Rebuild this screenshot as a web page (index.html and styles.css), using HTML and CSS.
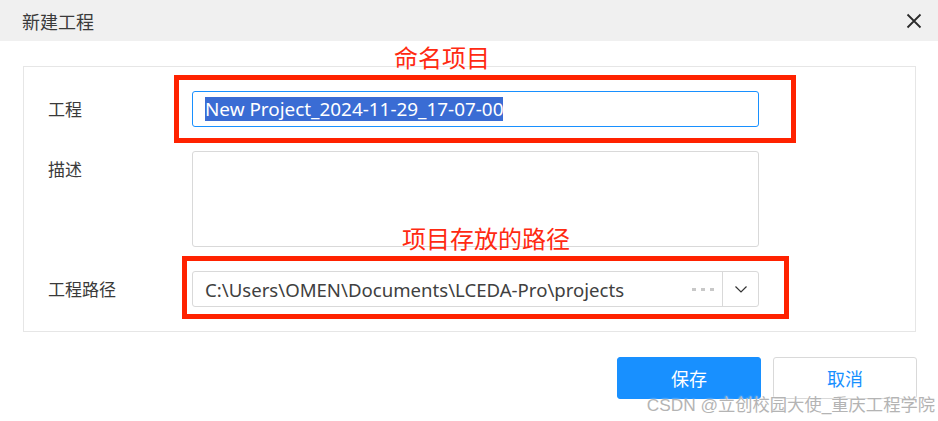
FILE: index.html
```html
<!DOCTYPE html>
<html lang="zh-CN">
  <head>
    <meta charset="utf-8">
    <title>新建工程</title>
    <link rel="stylesheet" href="styles.css">
  </head>
  <body>

  <div class="dialog">
    <div class="dialog-header">
      <span class="dialog-title">新建工程</span>
      <span class="dialog-close">
        <svg width="16" height="16" viewBox="0 0 16 16"><path d="M1.5 1.5 L14.5 14.5 M14.5 1.5 L1.5 14.5" stroke="#2b2b2b" stroke-width="1.8" fill="none"/></svg>
      </span>
    </div>

    <div class="dialog-body">
      <div class="form-panel">
        <div class="form-label">工程</div>
        <div class="text-input focused"><span class="selected">New Project_2024-11-29_17-07-00</span></div>

        <div class="form-label">描述</div>
        <div class="text-area"></div>

        <div class="form-label">工程路径</div>
        <div class="path-input">
          <div class="path-text">C:\Users\OMEN\Documents\LCEDA-Pro\projects</div>
          <div class="path-dots">
            <svg width="22" height="4" viewBox="0 0 22 4"><rect x="0" y="0" width="4" height="3" fill="#c8c8c8"/><rect x="9" y="0" width="4" height="3" fill="#c8c8c8"/><rect x="18" y="0" width="4" height="3" fill="#c8c8c8"/></svg>
          </div>
          <div class="path-arrow">
            <svg width="12" height="7" viewBox="0 0 12 7"><path d="M0.5 0.5 L6 6 L11.5 0.5" stroke="#333" stroke-width="1.2" fill="none"/></svg>
          </div>
        </div>
      </div>
    </div>

    <div class="dialog-footer">
      <button class="btn btn-primary">保存</button>
      <button class="btn btn-default">取消</button>
    </div>
  </div>

  <!-- annotations drawn over the screenshot -->
  <div class="note note-name">命名项目</div>
  <div class="mark mark-name"></div>
  <div class="note note-path">项目存放的路径</div>
  <div class="mark mark-path"></div>

  <div class="watermark">CSDN @立创校园大使_重庆工程学院</div>

  </body>
</html>
```

FILE: styles.css
```css
html {
  height: 100%;
}
body {
  margin: 0;
  padding: 0;
  width: 938px;
  height: 421px;
  overflow: hidden;
  position: relative;
  background: #ffffff;
  color: #333333;
  font-family: "Noto Sans", "Noto Sans CJK SC", sans-serif;
}

.dialog-header {
  height: 41px;
  background-color: #f0f0f0;
  display: flex;
  align-items: center;
  justify-content: space-between;
  padding: 0 16px 0 22px;
}
.dialog-title {
  font-family: "Noto Sans CJK SC", sans-serif;
  font-size: 18px;
  color: #3a3a3a;
  line-height: 24px;
}
.dialog-close {
  display: flex;
  width: 16px;
  height: 16px;
  margin-top: 1px;
}

.dialog-body {
  padding: 25px 22px 0 23px;
}
.form-panel {
  border: 1px solid #e6e6e6;
  padding: 24px 0 24px 24px;
  display: grid;
  grid-template-columns: 144px 567px;
  row-gap: 24px;
}
.form-label {
  font-family: "Noto Sans CJK SC", sans-serif;
  font-size: 17px;
  line-height: 36px;
  color: #3a3a3a;
}

.text-input {
  height: 34px;
  border: 1px solid #d9d9d9;
  border-radius: 3px;
  padding: 0 12px;
  display: flex;
  align-items: center;
  font-size: 18.9px;
}
.text-input.focused {
  border-color: #1890ff;
}
.selected {
  background-color: #3a6cd4;
  color: #ffffff;
  line-height: 24px;
  height: 24px;
}

.text-area {
  height: 94px;
  border: 1px solid #d9d9d9;
  border-radius: 3px;
}

.path-input {
  height: 34px;
  border: 1px solid #d9d9d9;
  border-radius: 3px;
  display: flex;
  align-items: center;
}
.path-text {
  flex: 1;
  padding-left: 12px;
  font-size: 18.6px;
  color: #404040;
  white-space: nowrap;
}
.path-dots {
  display: flex;
  padding: 2px 8px 0 0;
}
.path-arrow {
  width: 35px;
  height: 34px;
  border-left: 1px solid #d9d9d9;
  display: flex;
  align-items: center;
  justify-content: center;
}

.dialog-footer {
  display: flex;
  justify-content: flex-end;
  gap: 12px;
  padding: 25px 21px 0 0;
}
.btn {
  width: 144px;
  height: 42px;
  border-radius: 3px;
  font-family: "Noto Sans CJK SC", sans-serif;
  font-size: 18px;
  cursor: pointer;
}
.btn-primary {
  background-color: #1890ff;
  border: 1px solid #1890ff;
  color: #ffffff;
}
.btn-default {
  background-color: #ffffff;
  border: 1px solid #d9d9d9;
  color: #1890ff;
}

.note {
  position: absolute;
  font-family: "Noto Sans CJK SC", sans-serif;
  font-size: 24px;
  line-height: 24px;
  color: #ff2a12;
}
.note-name {
  left: 394px;
  top: 45px;
}
.note-path {
  left: 402px;
  top: 226px;
}
.mark {
  position: absolute;
  border: 5px solid #ff2200;
}
.mark-name {
  left: 174px;
  top: 75px;
  width: 612px;
  height: 58px;
}
.mark-path {
  left: 182px;
  top: 256px;
  width: 597px;
  height: 53px;
}

.watermark {
  position: absolute;
  right: 3px;
  top: 394px;
  font-family: "Liberation Sans", "Noto Sans CJK SC", sans-serif;
  font-size: 17.3px;
  line-height: 22px;
  color: #b4b4b4;
  text-shadow: 0 0 2px #ffffff;
  white-space: nowrap;
}
```
